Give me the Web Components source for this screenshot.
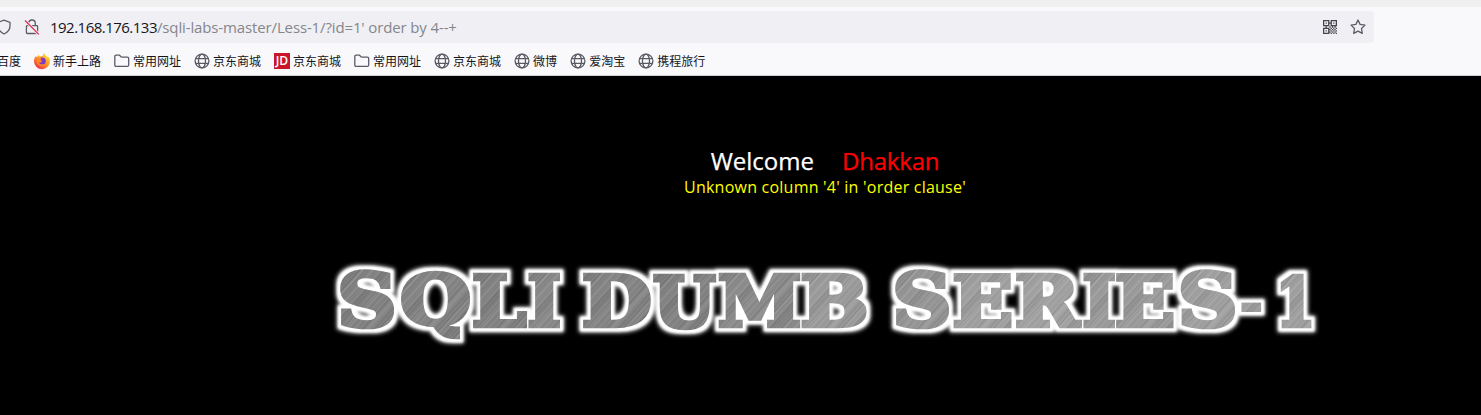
<!DOCTYPE html>
<html lang="zh-CN">
<head>
<meta charset="utf-8">
<title>Less-1</title>
<style>
html,body{margin:0;height:100%;background:#000;overflow:hidden}
body{font-family:"Open Sans","Noto Sans CJK SC",sans-serif}
</style>
</head>
<body>
<app-window></app-window>
<script>
const icons = {
  shield: '<path d="M8 1.2 14 3.4v3.3c0 4-2.400 6.600-6 8.300-3.600-1.700-6-4.300-6-8.300V3.400z"/>',
  lock: '<path d="M4.700 6.500V4.300a3.300 3.300 0 0 1 6.600 0v2.200M3.200 6.700h9.600q.8 0 .8.800v6q0 1-.9 1H3.300q-.9 0-.9-1v-6q0-.8.8-.8z"/><path d="M1 1.500 14.800 15.400" stroke="#f0f0f4" stroke-width="3"/><path d="M1 1.500 14.800 15.400" stroke="#e22850"/>',
  folder: '<path d="M2.300 2.200h3.200l1.900 1.900h6q1.300 0 1.300 1.300v6.500q0 1.500-1.500 1.500H2.300q-1.500 0-1.500-1.500V3.700q0-1.500 1.500-1.500z"/>',
  globe: '<circle cx="8" cy="8" r="6.900"/><ellipse cx="8" cy="8" rx="3.500" ry="6.900"/><path d="M1.300 5.700h13.400M1.300 10.300h13.400"/>',
  star: '<path stroke-linejoin="round" d="m8 1 2.100 4.400 4.900.7-3.500 3.400.8 4.900L8 12.100l-4.300 2.300.8-4.900L1 6.100l4.900-.7z"/>',
  jd: '<path fill="#c8162a" stroke="none" d="M0 0h16v16H0z"/><text x="8" y="12.300" text-anchor="middle" textLength="12.500" lengthAdjust="spacingAndGlyphs" fill="#fff" stroke="none" font-family="Open Sans" font-weight="600" font-size="12">JD</text>',
  fox: '<defs><linearGradient id="f" x1=".85" y1=".1" x2=".2" y2=".95"><stop stop-color="#ffe33a"/><stop offset=".5" stop-color="#ff9020"/><stop offset="1" stop-color="#f02c58"/></linearGradient></defs><path fill="url(#f)" stroke="none" d="M1.800 3.200 3 4.300 4.800 1.700l.7 2C7 2.700 8.500 3 9.200 2.500 8.900 1.400 9 .6 10 0c.8 2.200 3 2.800 3.500 4.600l.7-.8C15.500 5 16 7 16 8.300A7.900 7.700 0 0 1 0 8.500C0 6 .7 4.600 1.800 3.200z"/><circle cx="8.300" cy="8" r="3.500" fill="#8138c8" stroke="none"/><path fill="#ff8b22" stroke="none" d="M3.500 5c2 0 3.100-.3 4.300.7L6.500 7l1.700 1.500c-1 1.500-2.700 1.200-3.600.7 1 3 5 3.300 7 .8-.8 3.200-6.500 4.300-8.600.5C2 8 2.500 6 3.500 5z"/>'
};
const define = (tag, html, setup) => {
  const t = document.createElement('template');
  t.innerHTML = html;
  customElements.define(tag, class extends HTMLElement {
    connectedCallback() {
      if (this.shadowRoot) return;
      this.attachShadow({mode: 'open'}).append(t.content.cloneNode(true));
      if (setup) setup(this, this.shadowRoot);
    }
  });
};
define('ui-icon', `<style>:host{display:block;width:16px;height:16px;flex:none}svg{display:block;width:100%;height:100%;overflow:visible;fill:none;stroke:#5b5b66;stroke-width:1.300}</style><svg viewBox="0 0 16 16"></svg>`,
 (host, root) => {
  const svg = root.querySelector('svg'), name = host.getAttribute('name');
  if (name !== 'qr') { svg.innerHTML = icons[name]; return; }
  const rows = ['11111011111','10001010001','10101110101','10001010001','11111011111','00100101010','11111010101','10001101010','10101010101','10001101010','11111010101'];
  let d = '';
  rows.forEach((r, y) => [...r].forEach((c, x) => { if (c === '1') d += `M${x} ${y}h1v1h-1z`; }));
  svg.innerHTML = `<path fill="#45454d" stroke="none" transform="translate(1 1) scale(1.273)" d="${d}"/>`;
 });
define('book-mark', `<style>:host{display:flex;align-items:center;gap:3.500px;font:12px/16px "Noto Sans CJK SC",sans-serif;color:#15141a;white-space:nowrap}ui-icon{margin-left:.5px}span{display:block}</style><ui-icon></ui-icon><span><slot></slot></span>`,
 (host, root) => {
  const i = root.querySelector('ui-icon'), n = host.getAttribute('icon');
  if (!n) { i.remove(); return; }
  const fresh = document.createElement('ui-icon');
  fresh.setAttribute('name', n); i.replaceWith(fresh);
 });
define('address-bar', `<style>
:host{display:flex;align-items:center;box-sizing:border-box;width:1374px;height:32px;background:#f0f0f4;border-radius:0 4px 4px 0;padding-right:8px;font:15px/20px "Open Sans",sans-serif;color:#85858c}
.shield{margin-left:-4px}.lock{margin-left:12px}.url{margin-left:10px;margin-top:-1px;white-space:pre;flex:1}b{font-weight:400;color:#15141a;letter-spacing:-.52px}i{font-style:normal;letter-spacing:-.13px}.star{margin-left:12px}</style>
<ui-icon class="shield" name="shield"></ui-icon><ui-icon class="lock" name="lock"></ui-icon><span class="url"><b>192.168.176.133</b><i>/sqli-labs-master/Less-1/?id=1' order by 4--+</i></span><ui-icon name="qr"></ui-icon><ui-icon class="star" name="star"></ui-icon>`);
define('bookmark-bar', `<style>:host{display:flex;gap:12px;align-items:center;height:32px;margin-left:-3px;padding-top:2px;box-sizing:border-box}</style>
<book-mark>百度</book-mark><book-mark icon="fox">新手上路</book-mark><book-mark icon="folder">常用网址</book-mark><book-mark icon="globe">京东商城</book-mark><book-mark icon="jd">京东商城</book-mark><book-mark icon="folder">常用网址</book-mark><book-mark icon="globe">京东商城</book-mark><book-mark icon="globe">微博</book-mark><book-mark icon="globe">爱淘宝</book-mark><book-mark icon="globe">携程旅行</book-mark>`);
define('browser-chrome', `<style>:host{display:block;box-sizing:border-box;height:76px;background:#f9f9fb;border-top:7px solid #f0f0f0;border-bottom:1px solid #cccfcf;padding-top:4px}bookmark-bar{margin-top:1px}</style><address-bar></address-bar><bookmark-bar></bookmark-bar>`);

define('metal-banner', `<style>:host{display:block;height:120px}svg{display:block;width:1481px;height:120px}text{font-family:"DejaVu Serif",serif;font-weight:700;font-size:76px;paint-order:stroke;stroke-linejoin:miter}</style>
<svg viewBox="0 245 1481 120"><defs><filter id="glow" filterUnits="userSpaceOnUse" x="320" y="248" width="1020" height="110" color-interpolation-filters="sRGB">
<feMorphology in="SourceAlpha" operator="dilate" radius="4" result="wide"/><feGaussianBlur in="wide" stdDeviation="1.900" result="soft"/><feFlood flood-color="#fff"/><feComposite in2="soft" operator="in" result="halo"/>
<feMorphology in="SourceAlpha" operator="dilate" radius="2.500" result="near"/><feGaussianBlur in="near" stdDeviation=".9" result="edge"/><feFlood flood-color="#fff"/><feComposite in2="edge" operator="in" result="rim"/>
<feMerge><feMergeNode in="halo"/><feMergeNode in="rim"/><feMergeNode in="SourceGraphic"/></feMerge></filter></defs><g filter="url(#glow)"></g></svg>`,
 (host, root) => {
  // glyph, left, right, top, bottom, shade of the metal
  const letters = [['S',340,395,270,330,128],['Q',400,470,270,340,130],['L',473,527.5,273,328,128],['I',528.5,560,273,328,135],
   ['D',583,651,273,328,130],['U',653,717,273,330,128],['M',718,800.5,273,328,137],['B',801.5,867,273,328,153],
   ['S',895,950,270,330,148],['E',953.5,1012,273,328,158],['R',1016,1082.5,273,328,160],['I',1083.5,1115,273,328,153],['E',1116,1174,273,328,153],['S',1180.5,1236,270,330,158],['-',1241,1262,302,313,158],['1',1280,1312,273,328,158]];
  const ctx = document.createElement('canvas').getContext('2d');
  ctx.font = '700 760px "DejaVu Serif"';
  const defs = root.querySelector('defs'), g = root.querySelector('g');
  let seed = 7, streaks = '';
  const rnd = () => (seed = (seed * 16807) % 2147483647) / 2147483647;
  for (let y = 0; y < 70; y += .7) streaks += `<path d="M0 ${y.toFixed(1)}h150" stroke="${rnd() > .5 ? '#fff' : '#000'}" stroke-opacity="${(rnd() * .14).toFixed(2)}" stroke-width=".8"/>`;
  let pats = '', out = '';
  letters.forEach(([c, l, r, t, b, v], n) => {
    const m = ctx.measureText(c), w = c === '-' ? 0 : 5;
    const x0 = -m.actualBoundingBoxLeft / 10, x1 = m.actualBoundingBoxRight / 10, y0 = -m.actualBoundingBoxAscent / 10, y1 = m.actualBoundingBoxDescent / 10;
    const sx = (r - l) / (x1 - x0 + w), sy = (b - t) / (y1 - y0 + w);
    const tx = l - (x0 - w / 2) * sx, ty = t - (y0 - w / 2) * sy;
    pats += `<pattern id="m${n}" patternUnits="userSpaceOnUse" width="150" height="70" patternTransform="scale(${1 / sx} ${1 / sy}) rotate(-48)"><path fill="rgb(${v},${v},${v})" d="M0 0h150v70H0z"/>${streaks}</pattern>`;
    out += `<text transform="matrix(${sx} 0 0 ${sy} ${tx} ${ty})" fill="url(#m${n})" stroke="url(#m${n})" stroke-width="${w}">${c}</text>`;
  });
  const box = document.createElementNS('http://www.w3.org/2000/svg', 'g');
  box.innerHTML = pats; defs.append(...box.childNodes);
  g.innerHTML = out;
 });
define('lesson-page', `<style>:host{display:block;height:339px;background:#000;padding-top:68px;box-sizing:border-box;font-family:"Open Sans",sans-serif}
.msg{width:282px;margin-left:684px;text-align:center;white-space:pre}.hi{font-size:24px;line-height:34px;color:#fff;display:flex;justify-content:center;gap:28px;-webkit-text-stroke:.25px}.hi em{font-style:normal;color:#f00;letter-spacing:-.2px}.err{font-size:16px;letter-spacing:.23px;line-height:20px;color:#ff0;margin-top:-1px}metal-banner{margin-top:48px}</style>
<div class="msg"><div class="hi"><span>Welcome</span><em>Dhakkan</em></div><div class="err">Unknown column '4' in 'order clause'</div></div><metal-banner></metal-banner>`);
define('app-window', `<style>:host{display:block;width:1481px;height:415px;overflow:hidden}</style><browser-chrome></browser-chrome><lesson-page></lesson-page>`);
</script>
</body>
</html>
